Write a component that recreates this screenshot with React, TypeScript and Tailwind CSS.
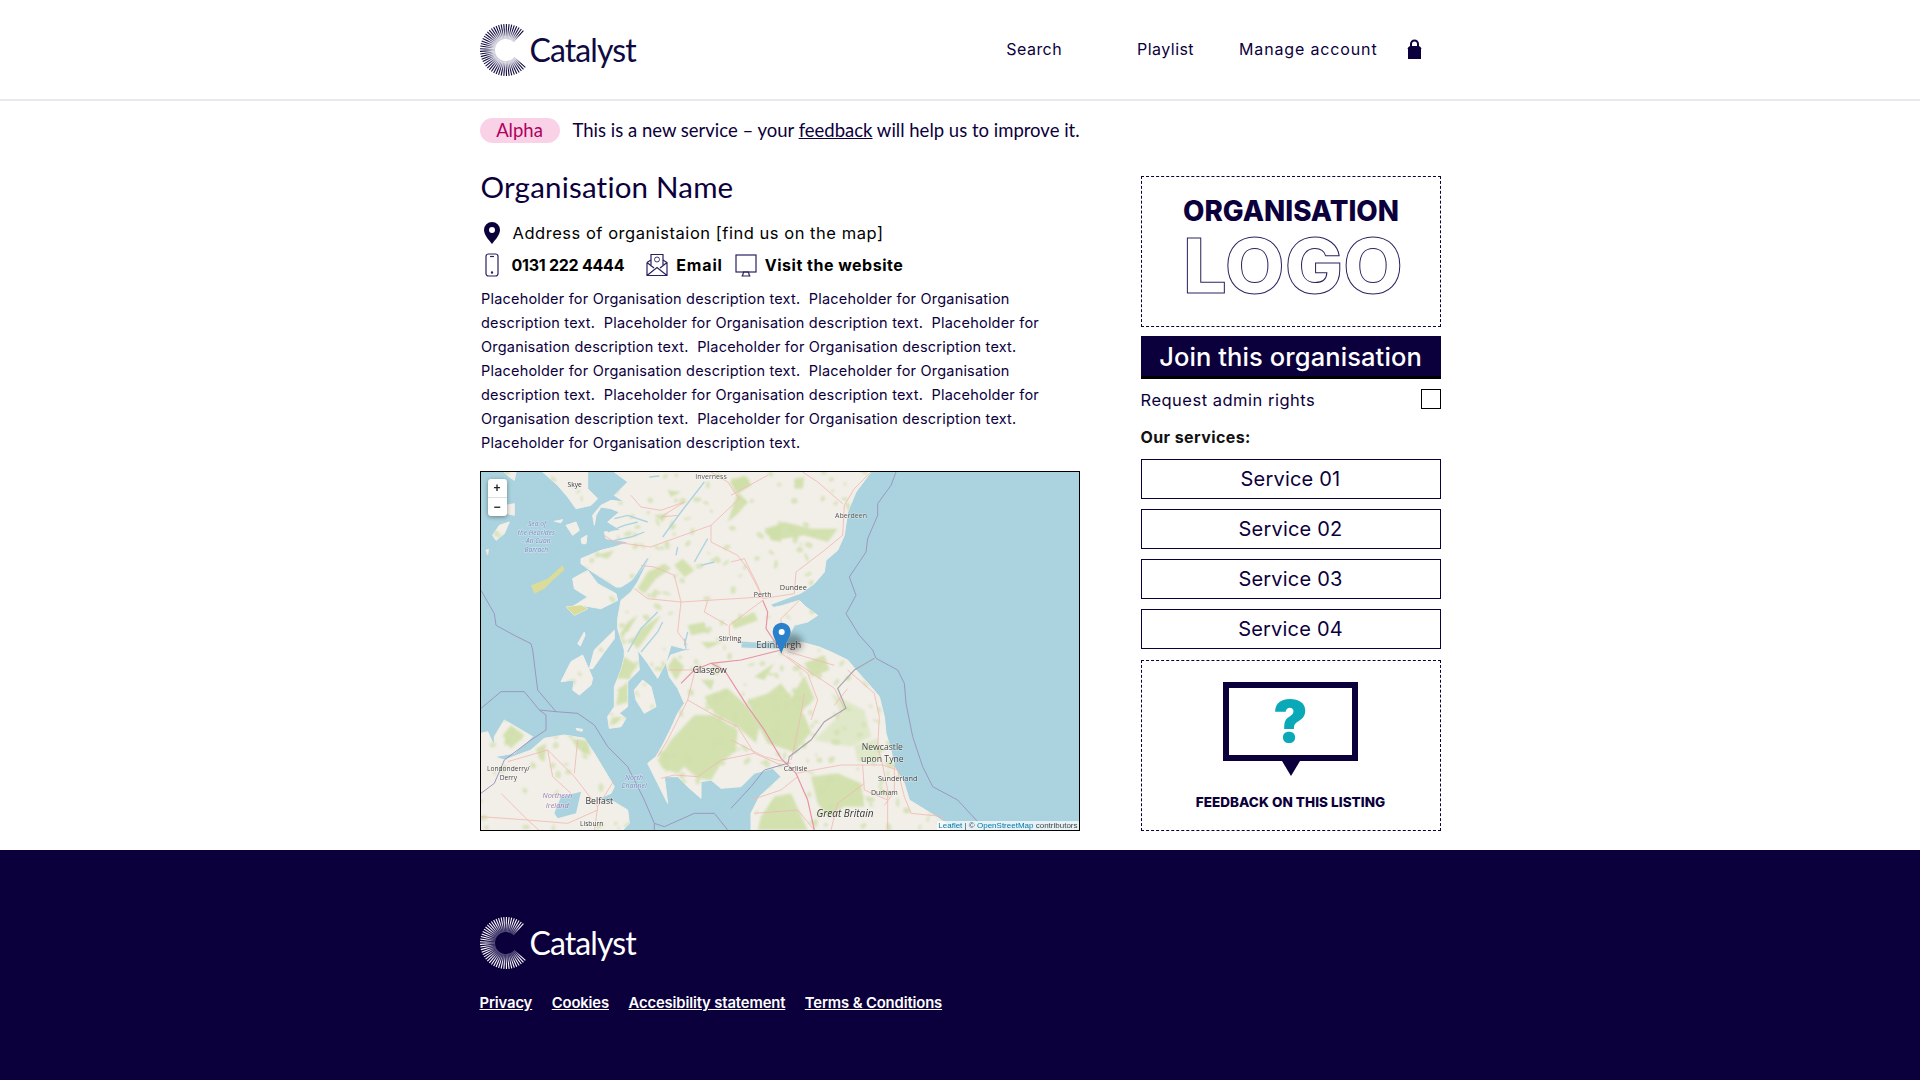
import React from "react";

const NAVY = "#0c003c";

const rays = Array.from({ length: 47 }, (_, i) => 42 + i * 5.87);

const Logo = ({ color, inner }: { color: string; inner: string }) => {
  const gid = `ray-${color.replace("#", "")}`;
  return (
    <div className="flex items-center gap-[4px]" style={{ color }}>
      <svg width="46" height="52" viewBox="0 0 46 52" className="shrink-0">
        <defs>
          <radialGradient id={gid} gradientUnits="userSpaceOnUse" cx="26" cy="26" r="26">
            <stop offset="0.5" stopColor={inner} />
            <stop offset="0.8" stopColor={color} />
          </radialGradient>
        </defs>
        {rays.map((a) => {
          const rad = (a * Math.PI) / 180;
          const c = Math.cos(rad);
          const s = Math.sin(rad);
          return (
            <line
              key={a}
              x1={26 + 11 * c}
              y1={26 + 11 * s}
              x2={26 + 26 * c}
              y2={26 + 26 * s}
              stroke={`url(#${gid})`}
              strokeWidth="1.1"
            />
          );
        })}
      </svg>
      <span className="font-['Lato',sans-serif] text-[32px] leading-none tracking-[-0.9px]">Catalyst</span>
    </div>
  );
};

const Lock = () => (
  <svg width="15" height="20" viewBox="0 0 15 20" fill={NAVY}>
    <path d="M1 9h13v11H1z" />
    <path d="M0.5 10C1 8 2 7.5 3 7V5a4.5 4.5 0 0 1 9 0v2c1 .5 2 1 2.5 3zM5 7h5V5a2.5 2.5 0 0 0-5 0z" fillRule="evenodd" />
  </svg>
);

const PinIcon = () => (
  <svg width="16" height="24" viewBox="0 0 16 24">
    <path
      d="M8 1a8 8 0 0 0-8 8c0 5 5 10 8 14 3-4 8-9 8-14a8 8 0 0 0-8-8zm0 5a3 3 0 1 1 0 6 3 3 0 0 1 0-6z"
      fill={NAVY}
      fillRule="evenodd"
    />
  </svg>
);

const PhoneIcon = () => (
  <svg width="14" height="24" viewBox="0 0 14 24" fill="none" stroke="#2a2160" strokeWidth="1.2">
    <rect x="1" y="1" width="12" height="22" rx="2.5" />
    <path d="M5 3.5h4" />
    <circle cx="7" cy="19.5" r="0.6" fill="#2a2160" />
  </svg>
);

const MailIcon = () => (
  <svg width="22" height="24" viewBox="0 0 22 24" fill="none" stroke="#2a2160" strokeWidth="1.2">
    <path d="M1 9.5V22.5H21V9.5L17 7M1 9.5L5 7M1 22.5L11 14.5L21 22.5M1 9.5L8 15M21 9.5L14 15" />
    <path d="M5 12V1.5H17V12" />
    <circle cx="11" cy="6.5" r="2.5" strokeWidth="0.9" />
  </svg>
);

const MonitorIcon = () => (
  <svg width="22" height="24" viewBox="0 0 22 24" fill="none" stroke="#2a2160" strokeWidth="1.2">
    <rect x="1" y="2" width="20" height="17" />
    <path d="M7.5 23L8.5 19H13.5L14.5 23H6.5H15.5" />
  </svg>
);

// map coordinates are 3x pixels from the map's top-left corner
const WATER = "#aad3df";
const LAND = "#f2efe9";
const GREEN = "#cfdfa9";
const GREEN_SOFT = "#dfe8c8";
const YELLOW = "#dcdc9a";

const land = [
  // mainland
  "1170,0 1125,60 1100,120 1090,190 1070,235 1035,265 1030,300 1000,335 965,360 950,368 880,398 870,405 900,402 955,385 975,405 1010,430 980,450 940,460 925,490 850,512 780,512 780,528 890,532 960,510 1015,525 1050,540 1100,564 1125,594 1170,644 1195,674 1210,734 1215,784 1230,834 1240,884 1270,934 1285,984 1350,1024 1395,1054 1410,1080 810,1080 810,1024 835,974 900,914 875,889 820,904 780,944 720,949 690,924 660,929 660,979 620,944 590,914 550,914 560,994 530,934 500,874 525,854 545,819 570,769 590,724 610,694 590,649 565,614 555,574 570,549 600,539 640,530 610,530 570,520 555,570 530,619 500,574 470,534 475,594 440,629 440,704 415,724 435,739 420,764 385,769 380,734 400,704 400,644 420,594 430,554 430,534 410,470 410,440 420,385 450,360 470,330 495,280 520,230 490,280 460,320 420,345 405,345 350,310 320,290 300,275 300,260 360,235 400,225 445,210 375,200 370,180 420,175 380,150 415,120 390,110 360,105 345,130 340,160 335,130 360,100 390,85 430,90 400,70 440,30 400,0",
  // skye
  "185,0 230,40 260,75 285,110 330,100 350,80 320,50 320,0",
  // mull
  "275,320 320,295 350,335 405,365 410,385 360,410 300,400 265,410 320,375 280,350",
  // ross of mull
  "255,405 300,400 320,410 280,430",
  // rum, eigg, canna
  "255,160 285,150 295,175 275,190",
  "300,200 318,190 315,215 303,215",
  "220,148 245,143 240,152",
  // outer hebrides
  "70,0 105,0 100,25 85,15",
  "75,100 100,95 100,130 80,125",
  "35,190 55,160 85,150 70,185 45,205",
  "15,235 22,232 20,248",
  // colonsay
  "290,515 310,480 312,490 298,522",
  // jura
  "340,534 400,475 400,500 370,540 335,590 325,590",
  // islay
  "240,629 270,569 305,549 335,619 330,639 295,669 275,654 280,624",
  // arran
  "460,654 485,624 510,644 525,704 490,724 465,684",
  // ireland
  "0,784 20,779 45,834 40,854 70,864 150,834 190,799 250,789 310,799 340,844 385,919 400,944 390,964 345,984 400,990 440,1014 445,1054 420,1080 0,1080",
  "40,794 70,744 155,794 100,844 40,854",
  "285,769 305,772 303,778 288,775",
];

const greens = [
  // galloway + southern uplands
  "530,864 570,804 640,729 700,729 770,774 765,834 720,874 690,924 650,919 610,884 590,904 545,889",
  "670,674 740,649 800,704 835,764 825,814 770,764 700,724",
  "800,684 860,664 900,634 970,730 990,780 940,840 860,814 820,740",
  "560,584 580,554 610,584 585,624",
  "660,624 700,624 690,654",
  "970,574 1030,549 1045,594 990,614",
  "820,614 880,574 850,624",
  "970,610 1000,680 960,720 930,680",
  "990,914 1070,904 1140,934 1150,1004 1090,1004 1040,1034 1010,994",
  "880,974 930,964 980,1074 830,1074 840,1034",
  // highlands
  "850,180 910,150 990,170 1070,170 1040,210 970,190 880,205",
  "940,20 970,15 965,50 940,50",
  "750,20 800,15 810,40 760,60",
  "470,350 500,300 550,275 570,290 525,320 490,365",
  "580,280 605,260 640,295 610,315",
  "745,30 790,10 810,40 770,65",
  "850,170 900,155 900,210 870,205",
  "750,450 820,420 830,445 760,470",
  "620,460 670,450 680,480 630,490",
  "660,510 720,510 680,530",
  "450,510 480,470 540,430 500,490 470,530",
  "415,490 440,450 470,430 440,480",
  "400,620 430,555 470,580 440,620",
  "405,700 415,650 440,630 440,690",
  "385,760 395,735 425,735 405,755",
  "770,60 800,90 770,125 740,150",
  "560,55 600,60 570,75",
  "520,130 560,125 545,150",
  "340,250 400,235 380,260",
  "350,315 390,335 370,345",
  // ulster
  "65,790 90,760 130,790 90,830",
  "270,800 320,805 330,850 290,830",
  "165,830 195,815 190,870 175,860",
  "310,820 320,850 300,840",
];

const softGreens = [
  "1050,664 1150,714 1170,794 1110,824 1000,804 1080,724",
  "1120,820 1190,800 1200,860 1130,870",
];

const waterLines = [
  "545,195 600,120 670,30",
  "640,270 680,200",
  "400,205 450,195 490,180",
  "380,180 430,160 470,150",
  "400,140 440,130 500,150",
  "430,350 460,320 500,260",
  "440,540 480,470 530,420",
  "480,540 530,480 545,450",
  "590,225 585,250",
  "610,500 615,530",
  "770,510 850,515",
  "620,480 610,520",
  "505,15 535,12",
  "660,280 700,270",
];

const lochsFill = [
  "220,1024 240,974 300,959 285,1024 230,1039",
  "870,398 950,368 955,378 880,405",
];

const roads = [
  "370,190 400,210 510,225 550,210 690,160 775,80 740,30 690,0",
  "450,70 480,105 540,115 610,90 540,135 590,130",
  "845,375 800,290 770,250 690,210 690,160",
  "845,375 680,385 600,390 500,380 460,350",
  "600,390 580,310 520,285 480,280",
  "600,390 590,480 620,520",
  "845,385 745,460 745,490 780,510",
  "680,385 670,420 740,460",
  "845,380 940,365 945,300 1030,235 1085,190 1090,100 1120,50 1170,0",
  "750,70 860,10",
  "1085,95 1010,30 965,0",
  "750,270 790,260 830,340 845,380",
  "955,385 900,440 900,510",
  "560,594 640,594",
  "640,604 620,684 560,804 530,854",
  "620,684 690,724 770,764 820,844 900,879",
  "820,844 720,864 650,914 580,909 540,919",
  "80,869 200,834 280,914 350,1004 340,1080",
  "0,1034 140,1044 260,1054 350,1014",
  "200,834 215,914 270,964",
  "280,904 290,804",
  "350,1004 400,924",
  "60,964 140,1044 180,1080",
  "920,539 1060,580",
  "895,539 980,604 1010,684 990,744",
  "920,554 1060,649 1090,709 1070,734",
  "1100,594 1180,664 1195,734 1190,824 1205,879 1220,954 1220,1080",
  "945,904 1080,879 1205,879 1250,894 1270,974 1290,1024 1390,1034",
  "1145,879 1150,954 1220,984",
  "930,874 850,854 750,804",
  "970,664 960,724 940,824 930,864",
  "810,984 900,954 950,914",
  "820,1024 950,1014 1000,1074",
  "1150,934 1070,994 1050,1074",
  "1240,880 1240,960 1210,1000",
  "1100,650 1060,700",
];

const motorways = [
  "600,634 640,594 690,574 780,564 900,534",
  "690,574 730,594 800,704 850,774 900,859 945,904 980,984 1000,1074",
  "845,385 860,420 855,470 895,530",
];

const seaLines = [
  "1245,0 1230,40 1190,95 1190,130 1160,200 1155,240 1105,315 1125,370 1095,425 1135,490 1175,534 1185,559 1250,594 1270,634 1275,694 1295,794 1325,884 1355,944 1430,984 1490,1049",
  "0,355 40,425 45,460 100,490 150,515 155,534 170,654 225,719 290,724 340,759 380,824 440,884 490,984 520,1054 550,1064 640,1024 700,1024 745,1080",
  "0,709 60,659 130,659 175,714 225,719",
  "175,714 195,729 195,774 150,804 70,864 40,934 0,964",
  "520,1054 520,1080",
  "750,1009 810,944 850,894 920,874",
];

type Label = [string, number, number, number, string, boolean?];

const labels: Label[] = [
  ["Inverness", 690, 20, 21, "#555"],
  ["Skye", 281, 44, 20, "#333"],
  ["Aberdeen", 1110, 138, 21, "#555"],
  ["Sea of", 168, 161, 20, "#7d87c0", true],
  ["the Hebrides", 166, 188, 20, "#7d87c0", true],
  ["- An Cuan", 166, 214, 20, "#7d87c0", true],
  ["Barrach", 166, 239, 20, "#7d87c0", true],
  ["Dundee", 937, 353, 22, "#444"],
  ["Perth", 845, 374, 21, "#444"],
  ["Stirling", 747, 507, 21, "#444"],
  ["Edinburgh", 893, 528, 28, "#444"],
  ["Glasgow", 686, 602, 26, "#333"],
  ["Newcastle", 1204, 835, 26, "#444"],
  ["upon Tyne", 1204, 869, 26, "#444"],
  ["Carlisle", 944, 898, 21, "#444"],
  ["Sunderland", 1250, 928, 22, "#444"],
  ["Durham", 1210, 970, 21, "#444"],
  ["Londonderry/", 82, 897, 20, "#444"],
  ["Derry", 82, 923, 20, "#444"],
  ["North", 459, 923, 21, "#7d87c0", true],
  ["Channel", 459, 948, 21, "#7d87c0", true],
  ["Northern", 229, 979, 22, "#9a78b0", true],
  ["Ireland", 229, 1007, 22, "#9a78b0", true],
  ["Belfast", 355, 997, 26, "#333"],
  ["Lisburn", 332, 1062, 20, "#444"],
  ["Great Britain", 1092, 1036, 30, "#333", true],
];

// speckle of woodland, clipped to the land shapes
let seed = 7;
const rnd = () => {
  seed = (seed * 16807) % 2147483647;
  return seed / 2147483647;
};
const specks = Array.from({ length: 520 }, () => ({
  x: rnd() * 1420,
  y: rnd() * 1074,
  rx: 4 + rnd() * 10,
  ry: 3 + rnd() * 6,
  a: rnd() * 180,
}));

const MapView = () => (
  <div className="relative w-[600px] h-[360px] border border-black overflow-hidden bg-[#aad3df]">
    <svg
      viewBox="0 0 1794 1074"
      preserveAspectRatio="none"
      className="block w-full h-full blur-[0.5px] font-['Open_Sans',sans-serif]"
    >
      <defs>
        <filter id="pin-shadow" x="-50%" y="-50%" width="200%" height="200%">
          <feGaussianBlur stdDeviation="9" />
        </filter>
        <filter id="soft" x="-5%" y="-5%" width="110%" height="110%">
          <feGaussianBlur stdDeviation="3" />
        </filter>
        <clipPath id="land-clip">
          {land.map((p) => (
            <polygon key={p} points={p} />
          ))}
        </clipPath>
      </defs>
      <rect width="1794" height="1074" fill={WATER} />
      <g stroke={LAND} strokeWidth="3" strokeLinejoin="round" fill={LAND}>
        {land.map((p) => (
          <polygon key={p} points={p} />
        ))}
      </g>
      <polygon points="255,405 300,400 320,410 280,430" fill={YELLOW} />
      <polygon points="150,340 200,320 245,280 250,295 215,325 190,350 160,365" fill={YELLOW} />
      <g clipPath="url(#land-clip)">
        <g filter="url(#soft)">
          {softGreens.map((p) => (
            <polygon key={p} points={p} fill={GREEN_SOFT} />
          ))}
          {greens.map((p) => (
            <polygon key={p} points={p} fill={GREEN} opacity="0.9" />
          ))}
          {specks.map((s, i) => (
            <ellipse
              key={i}
              cx={s.x}
              cy={s.y}
              rx={s.rx}
              ry={s.ry}
              transform={`rotate(${s.a} ${s.x} ${s.y})`}
              fill={GREEN}
              opacity="0.75"
            />
          ))}
        </g>
      </g>
      {lochsFill.map((p) => (
        <polygon key={p} points={p} fill={WATER} />
      ))}
      {waterLines.map((p) => (
        <polyline key={p} points={p} fill="none" stroke={WATER} strokeWidth="4" />
      ))}
      {roads.map((p) => (
        <polyline key={p} points={p} fill="none" stroke="#f2b8b2" strokeWidth="2.5" />
      ))}
      {motorways.map((p) => (
        <polyline key={p} points={p} fill="none" stroke="#e892a4" strokeWidth="3.5" />
      ))}
      {seaLines.map((p) => (
        <polyline key={p} points={p} fill="none" stroke="#9c97bd" strokeWidth="3" />
      ))}
      <polyline
        points="1180,559 1120,594 1070,649 1095,709 1030,749 990,804 925,854 920,879"
        fill="none"
        stroke="#a9a6ab"
        strokeWidth="3.5"
      />
      {labels.map(([t, x, y, s, c, it]) => (
        <text
          key={t}
          x={x}
          y={y}
          fontSize={s}
          fill={c}
          textAnchor="middle"
          fontStyle={it ? "italic" : "normal"}
          stroke="#ffffff"
          strokeOpacity="0.45"
          strokeWidth="3"
          paintOrder="stroke"
        >
          {t}
        </text>
      ))}
      <ellipse cx="935" cy="512" rx="30" ry="26" fill="#222" opacity="0.4" filter="url(#pin-shadow)" />
      <path d="M902 452a27 27 0 0 0-27 27c0 16 18 42 26 66 7-24 28-50 28-66a27 27 0 0 0-27-27z" fill="#2a81cb" />
      <circle cx="902" cy="480" r="9" fill="#fff" />
    </svg>
    <div className="absolute left-[7px] top-[7px] w-[19px] h-[37px] bg-white rounded-[3px] shadow-[0_1px_4px_rgba(0,0,0,0.4)] flex flex-col items-center font-['Liberation_Sans',sans-serif] font-bold text-[12px] leading-[18px] text-[#222]">
      <span className="h-[19px] w-full text-center border-b border-[#ddd]">+</span>
      <span className="h-[18px]">−</span>
    </div>
    <div className="absolute right-0 bottom-0 bg-white/70 px-[1px] font-['Liberation_Sans',sans-serif] text-[8px] leading-[9px] text-[#444] blur-[0.2px]">
      <span className="text-[#0078a8]">Leaflet</span> | © <span className="text-[#0078a8]">OpenStreetMap</span> contributors
    </div>
  </div>
);

const descLines = [
  "Placeholder for Organisation description text.\u00a0 Placeholder for Organisation",
  "description text.\u00a0 Placeholder for Organisation description text.\u00a0 Placeholder for",
  "Organisation description text.\u00a0 Placeholder for Organisation description text.",
  "Placeholder for Organisation description text.\u00a0 Placeholder for Organisation",
  "description text.\u00a0 Placeholder for Organisation description text.\u00a0 Placeholder for",
  "Organisation description text.\u00a0 Placeholder for Organisation description text.",
  "Placeholder for Organisation description text.",
];

const services = ["Service 01", "Service 02", "Service 03", "Service 04"];
const footerLinks = ["Privacy", "Cookies", "Accesibility statement", "Terms & Conditions"];

export default function App() {
  return (
    <div className="h-[1080px] flex flex-col bg-white font-['Inter',sans-serif] text-[#0c003c] overflow-hidden">
      <header className="h-[101px] shrink-0 border-b-2 border-[#e8e8ef]">
        <div className="w-[961px] mx-auto h-full flex items-center">
          <Logo color="#0f0a3f" inner="#c9c8d6" />
          <nav className="ml-auto flex items-center text-[16px] tracking-[0.45px] -mt-[1px]">
            <span>Search</span>
            <span className="ml-[75px]">Playlist</span>
            <span className="ml-[45px] tracking-[0.85px]">Manage account</span>
            <span className="ml-[29px] mr-[19px] flex">
              <Lock />
            </span>
          </nav>
        </div>
      </header>

      <div className="w-[961px] mx-auto flex-1">
        <div className="mt-[17px] flex items-center h-[25px] font-['Lato',sans-serif] text-[18.5px]">
          <span className="w-[80px] h-[25px] rounded-full bg-[#f9d2e8] text-[#b0005c] text-center leading-[25px]">Alpha</span>
          <span className="ml-[13px]">
            This is a new service – your <span className="underline">feedback</span> will help us to improve it.
          </span>
        </div>

        <main className="mt-[33px] flex justify-between">
          <section className="w-[600px]">
            <h1 className="font-['Lato',sans-serif] font-normal text-[29.5px] leading-[36px] tracking-[0.2px] pl-[1px] -mt-[7px]">
              Organisation Name
            </h1>
            <div className="mt-[16px] h-[24px] flex items-center text-black text-[16.5px] tracking-[0.53px]">
              <span className="w-[24px] pl-[4px] flex">
                <PinIcon />
              </span>
              <span className="ml-[9px]">Address of organistaion [find us on the map]</span>
            </div>
            <div className="mt-[8px] h-[24px] flex items-center text-black font-bold text-[16px]">
              <span className="w-[24px] pl-[5px] flex">
                <PhoneIcon />
              </span>
              <span className="ml-[8px] tracking-[-0.25px]">0131 222 4444</span>
              <span className="ml-[22px] flex">
                <MailIcon />
              </span>
              <span className="ml-[8px] tracking-[0.85px]">Email</span>
              <span className="ml-[12px] flex">
                <MonitorIcon />
              </span>
              <span className="ml-[8px] tracking-[0.5px]">Visit the website</span>
            </div>
            <p className="mt-[10px] pl-[1.5px] text-[14.5px] leading-[24px] tracking-[0.2px] whitespace-nowrap">
              {descLines.map((l, i) => (
                <span key={i} className="block">
                  {l}
                </span>
              ))}
            </p>
            <div className="mt-[16px]">
              <MapView />
            </div>
          </section>

          <aside className="w-[300px]">
            <div className="h-[151px] border border-dashed border-[#0c003c] flex flex-col items-center">
              <svg width="240" height="125" viewBox="0 0 240 125" className="mt-[14px] shrink-0">
                <text
                  x="120"
                  y="30"
                  textAnchor="middle"
                  textLength="216"
                  lengthAdjust="spacingAndGlyphs"
                  fontFamily="Inter, sans-serif"
                  fontWeight="800"
                  fontSize="28.5"
                  fill={NAVY}
                >
                  ORGANISATION
                </text>
                <text
                  x="122"
                  y="102"
                  textAnchor="middle"
                  textLength="220"
                  lengthAdjust="spacingAndGlyphs"
                  fontFamily="Inter, sans-serif"
                  fontWeight="800"
                  fontSize="76"
                  fill="none"
                  stroke="#2d2560"
                  strokeWidth="1"
                >
                  LOGO
                </text>
              </svg>
            </div>
            <button className="mt-[9px] w-full h-[43px] bg-[#0c003c] border-b-[3px] border-black text-white text-[25.5px] font-medium tracking-[0.1px] flex items-center justify-center pt-[2px]">
              Join this organisation
            </button>
            <label className="mt-[10px] h-[20px] flex items-center justify-between text-[16.5px] tracking-[0.5px]">
              <span className="mt-[2px]">Request admin rights</span>
              <span className="w-[20px] h-[20px] border border-black bg-white" />
            </label>
            <h2 className="mt-[18px] text-[16px] leading-[20px] font-bold text-[#111] tracking-[0.4px]">Our services:</h2>
            <div className="mt-[12px] flex flex-col gap-[10px]">
              {services.map((s) => (
                <div
                  key={s}
                  className="h-[40px] border border-[#0c003c] flex items-center justify-center text-[20px] tracking-[0.2px]"
                >
                  {s}
                </div>
              ))}
            </div>
            <div className="mt-[11px] h-[171px] border border-dashed border-[#0c003c] flex flex-col items-center pt-[21px]">
              <div className="relative w-[135px] h-[79px] border-[6px] border-[#0c003c] flex items-center justify-center">
                <span className="font-['Inter',sans-serif] font-black text-[#0aa9b8] text-[58px] leading-none -mt-[1px]">?</span>
                <span className="absolute left-1/2 -translate-x-1/2 -bottom-[21px] w-0 h-0 border-x-[9px] border-x-transparent border-t-[15px] border-t-[#0c003c]" />
              </div>
              <span className="mt-[31px] font-extrabold text-[13.5px] leading-[20px] tracking-[0.05px]">FEEDBACK ON THIS LISTING</span>
            </div>
          </aside>
        </main>
      </div>

      <footer className="h-[230px] shrink-0 bg-[#0c003c] text-white">
        <div className="w-[961px] mx-auto pt-[67px]">
          <Logo color="#ffffff" inner="#5a5480" />
          <div className="mt-[24px] flex gap-[19.5px] text-[14.8px] leading-[20px] font-semibold underline tracking-[-0.12px]">
            {footerLinks.map((l) => (
              <span key={l}>{l}</span>
            ))}
          </div>
        </div>
      </footer>
    </div>
  );
}
